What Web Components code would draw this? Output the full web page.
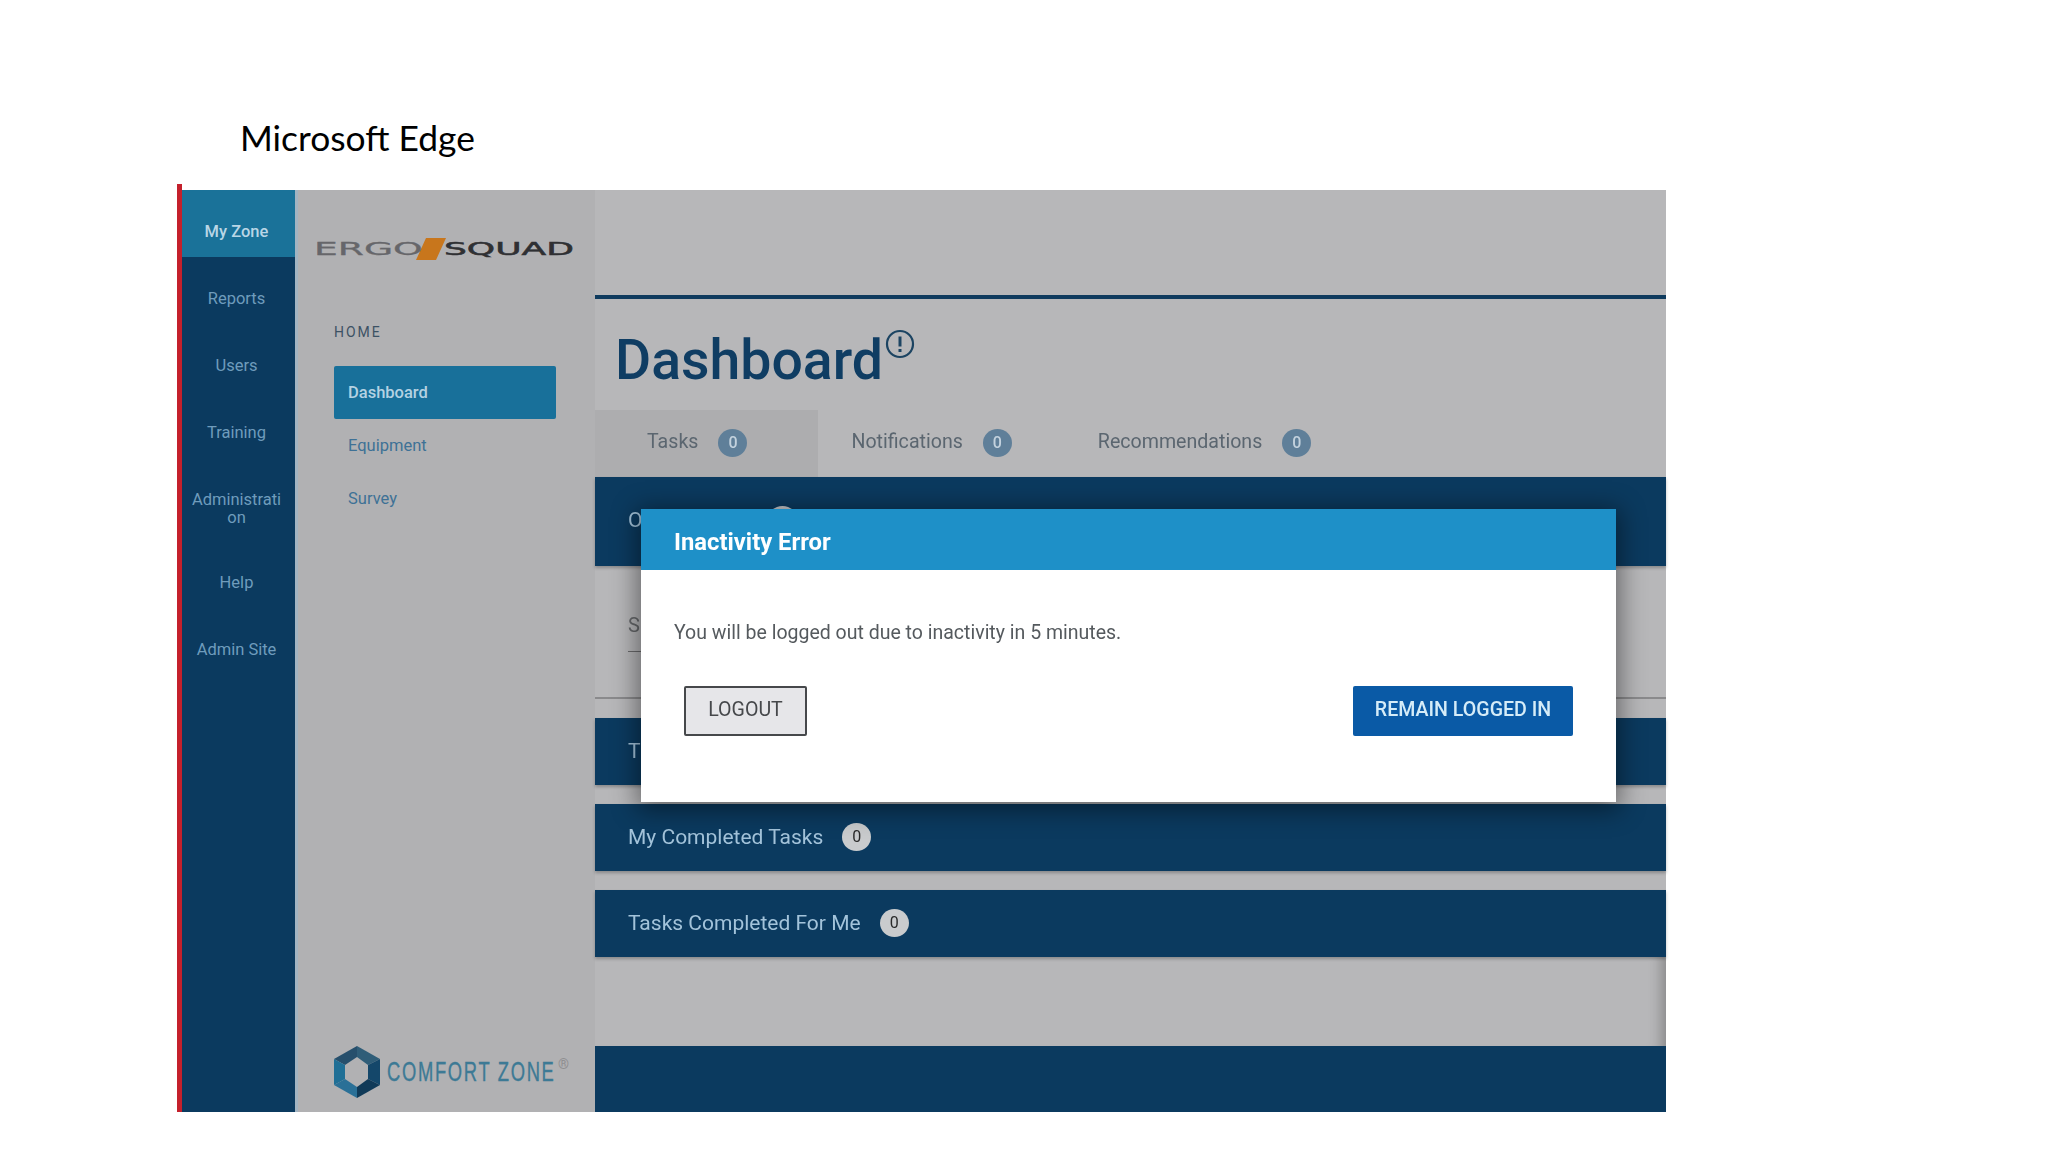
<!DOCTYPE html>
<html lang="en">
<head>
<meta charset="utf-8">
<title>Microsoft Edge</title>
<style>
  html, body { margin: 0; background: #fff; }
  body { font-family: Roboto, "Liberation Sans", sans-serif; height: 1152px; overflow: hidden; }
</style>
</head>
<body>
<slide-page>
  <span slot="caption">Microsoft Edge</span>
  <app-shell>
    <rail-nav slot="rail">
      <rail-item active>My Zone</rail-item>
      <rail-item>Reports</rail-item>
      <rail-item>Users</rail-item>
      <rail-item>Training</rail-item>
      <rail-item tight>Administration</rail-item>
      <rail-item>Help</rail-item>
      <rail-item>Admin Site</rail-item>
    </rail-nav>
    <side-nav slot="side">
      <ergo-logo slot="top"></ergo-logo>
      <span slot="heading">HOME</span>
      <side-link active>Dashboard</side-link>
      <side-link>Equipment</side-link>
      <side-link>Survey</side-link>
      <comfort-logo slot="bottom"></comfort-logo>
    </side-nav>
    <dash-main slot="main">
      <dash-tab slot="tabs" active>Tasks<count-badge slot="count" tone="tab">0</count-badge></dash-tab>
      <dash-tab slot="tabs">Notifications<count-badge slot="count" tone="tab">0</count-badge></dash-tab>
      <dash-tab slot="tabs">Recommendations<count-badge slot="count" tone="tab">0</count-badge></dash-tab>
      <task-panel first>O<count-badge slot="count" style="margin-left:107px">0</count-badge></task-panel>
      <search-card>S</search-card>
      <task-panel>T</task-panel>
      <task-panel>My Completed Tasks<count-badge slot="count">0</count-badge></task-panel>
      <task-panel>Tasks Completed For Me<count-badge slot="count">0</count-badge></task-panel>
    </dash-main>
    <modal-dialog slot="overlay">
      <span slot="title">Inactivity Error</span>
      You will be logged out due to inactivity in 5 minutes.
      <ui-button slot="actions">LOGOUT</ui-button>
      <ui-button slot="actions" primary>REMAIN LOGGED IN</ui-button>
    </modal-dialog>
  </app-shell>
</slide-page>

<script>
function defineEl(name, html) {
  class El extends HTMLElement {
    constructor() {
      super();
      this.attachShadow({ mode: 'open' }).innerHTML = html;
    }
  }
  if (!customElements.get(name)) customElements.define(name, El);
}

defineEl('slide-page', `
  <style>
    :host { display: block; }
    .caption {
      height: 184px; box-sizing: border-box; padding: 116px 0 0 240px;
      font: 35.4px/44px Lato, "Open Sans", sans-serif; color: #000;
    }
  </style>
  <div class="caption"><slot name="caption"></slot></div>
  <slot></slot>
`);

defineEl('app-shell', `
  <style>
    :host {
      display: block; position: relative;
      width: 1489px; height: 928px; margin-left: 177px; box-sizing: border-box;
      border-left: 5px solid #c4202c;
      padding-top: 6px;
      filter: blur(0.6px);
    }
    .grid { display: grid; grid-template-columns: 113px 300px 1fr; height: 100%; }
  </style>
  <div class="grid">
    <slot name="rail"></slot>
    <slot name="side"></slot>
    <slot name="main"></slot>
  </div>
  <slot name="overlay"></slot>
`);

defineEl('rail-nav', `
  <style>
    :host { display: flex; flex-direction: column; background: #0b3a5f; min-height: 0; }
  </style>
  <slot></slot>
`);

defineEl('rail-item', `
  <style>
    :host {
      display: block; box-sizing: border-box;
      padding: 33px 11px 16px 7px;
      font: 400 16.5px/18px Roboto, sans-serif; color: #6f9cbc;
      text-align: center; word-break: break-all;
    }
    :host([active]) { background: #1a7299; color: #b9d6e6; font-weight: 500; }
    :host([tight]) { padding-bottom: 14px; }
  </style>
  <slot></slot>
`);

defineEl('side-nav', `
  <style>
    :host {
      display: flex; flex-direction: column; box-sizing: border-box;
      background: #b1b1b3; border-left: 3px solid #a2b4c2;
      padding: 42px 0 14px 16px; min-height: 0;
    }
    .heading {
      margin: 56px 0 0 20px;
      font: 400 14px/20px Roboto, sans-serif; letter-spacing: 2px; color: #3c5164;
    }
    .links { margin: 24px 0 0 20px; display: flex; flex-direction: column; }
    .bottom { margin-top: auto; padding-left: 20px; }
  </style>
  <slot name="top"></slot>
  <div class="heading"><slot name="heading"></slot></div>
  <div class="links"><slot></slot></div>
  <div class="bottom"><slot name="bottom"></slot></div>
`);

defineEl('side-link', `
  <style>
    :host {
      display: flex; align-items: center; box-sizing: border-box;
      width: 222px; height: 53px; padding-left: 14px; border-radius: 2px;
      font: 400 16.5px/20px Roboto, sans-serif; color: #3e7196;
    }
    :host([active]) { background: #18709a; color: #b4d2e2; font-weight: 500; }
  </style>
  <slot></slot>
`);

defineEl('ergo-logo', `
  <style>
    :host { display: flex; align-items: center; height: 34px; width: 262px; }
    .word {
      display: inline-block; transform-origin: left center;
      font: 400 18px/18px "DejaVu Sans", sans-serif; white-space: nowrap;
    }
    .a { width: 105px; color: #66666a; transform: scaleX(2.09); -webkit-text-stroke: 0.3px #66666a; }
    .b { width: 130px; color: #2f3033; transform: scaleX(2); -webkit-text-stroke: 0.5px #2f3033; }
    svg { flex: none; margin: 0 -2px 0 -3px; }
  </style>
  <span class="word a">ERGO</span>
  <svg width="30" height="24" viewBox="0 0 30 24"><path d="M10 1 H30 L20 23 H0 Z" fill="#c8761c"/></svg>
  <span class="word b">SQUAD</span>
`);

defineEl('comfort-logo', `
  <style>
    :host { display: flex; align-items: center; height: 52px; }
    svg { flex: none; }
    .name {
      display: inline-block; width: 165px; margin-left: 7px; transform-origin: left center; transform: scaleX(0.655);
      font: 400 28px/30px "Liberation Sans", sans-serif;
      letter-spacing: 2.6px; color: #3d7a95; white-space: nowrap; -webkit-text-stroke: 0.4px #3d7a95;
    }
    .reg { align-self: flex-start; margin: 10px 0 0 6px; font: 14px/16px Roboto, sans-serif; color: #8f8f91; }
  </style>
  <svg width="46" height="52" viewBox="0 0 46 52">
    <path d="M23 0 L46 13 L34 19 L23 11 Z" fill="#2f5d78"/>
    <path d="M23 0 L0 13 L11 19 L23 11 Z" fill="#264f6c"/>
    <path d="M0 13 L0 39 L11 33 L11 19 Z" fill="#1f6f96"/>
    <path d="M46 13 L46 39 L34 33 L34 19 Z" fill="#14476a"/>
    <path d="M0 39 L23 52 L23 41 L11 33 Z" fill="#2a7097"/>
    <path d="M46 39 L23 52 L23 41 L34 33 Z" fill="#103a58"/>
  </svg>
  <span class="name">COMFORT ZONE</span>
  <span class="reg">®</span>
`);

defineEl('dash-main', `
  <style>
    :host { display: flex; flex-direction: column; background: #b7b7b9; min-height: 0; }
    .top { height: 105px; border-bottom: 4px solid #0f3b5e; flex: none; }
    .heading { height: 111px; flex: none; display: flex; padding-left: 20px; box-sizing: border-box; }
    h1 { margin: 29px 0 0; font: 500 55.4px/66px Roboto, sans-serif; color: #0f3d63; }
    svg { margin: 30px 0 0 2px; flex: none; }
    .tabs { display: flex; height: 67px; flex: none; }
    .body { display: flex; flex-direction: column; flex: none; }
    .spacer { flex: 1; box-shadow: inset -16px 0 14px -12px rgba(0,0,0,.28); }
    .foot { height: 66px; background: #0b3a5f; flex: none; }
  </style>
  <div class="top"></div>
  <div class="heading">
    <h1>Dashboard</h1>
    <svg width="30" height="30" viewBox="0 0 30 30" fill="none" stroke="#1c4462">
      <circle cx="15" cy="15" r="13" stroke-width="2.2"/>
      <path d="M15 7.5 V17.5" stroke-width="3"/>
      <path d="M15 20 V23" stroke-width="3"/>
    </svg>
  </div>
  <div class="tabs"><slot name="tabs"></slot></div>
  <div class="body"><slot></slot></div>
  <div class="spacer"></div>
  <div class="foot"></div>
`);

defineEl('dash-tab', `
  <style>
    :host {
      display: flex; align-items: center; gap: 20px; box-sizing: border-box;
      padding: 0 53px 4px 33px;
      font: 400 19.6px/24px Roboto, sans-serif; color: #5b6670;
    }
    :host([active]) { background: #adadaf; padding: 0 71px 4px 52px; }
  </style>
  <slot></slot><slot name="count"></slot>
`);

defineEl('count-badge', `
  <style>
    :host {
      display: inline-flex; align-items: center; justify-content: center;
      width: 29px; height: 28px; border-radius: 50%;
      background: #c9cbcd; color: #2a2a2a;
      font: 400 16px/1 Roboto, sans-serif;
    }
    :host([tone="tab"]) { background: #5f7f99; color: #c3d2de; font-weight: 500; margin-top: 2px; }
  </style>
  <slot></slot>
`);

defineEl('task-panel', `
  <style>
    :host {
      display: flex; align-items: center; gap: 19px; box-sizing: border-box;
      height: 67px; margin-top: 19px; padding: 0 0 2px 33px;
      background: #0b3a5f; flex: none;
      font: 400 21px/24px Roboto, sans-serif; color: #a3c3da;
      box-shadow: 0 2px 3px rgba(0,0,0,.25);
    }
    :host([first]) { height: 89px; margin-top: 0; padding-bottom: 4px; }
  </style>
  <slot></slot><slot name="count"></slot>
`);

defineEl('search-card', `
  <style>
    :host {
      display: block; box-sizing: border-box; height: 133px; flex: none;
      padding: 45px 0 0 33px;
      border-bottom: 2px solid #8a8a8c;
      font: 400 20px/28px Roboto, sans-serif; color: #66686b;
    }
    .line { width: 30px; height: 1px; margin-top: 12px; background: #6a6a6c; }
  </style>
  <slot></slot>
  <div class="line"></div>
`);

defineEl('modal-dialog', `
  <style>
    :host {
      position: absolute; left: 459px; top: 325px; width: 975px; height: 293px;
      display: flex; flex-direction: column; background: #fff;
      box-shadow: 0 4px 24px 4px rgba(0,0,0,.45);
    }
    header {
      height: 61px; flex: none; display: flex; align-items: center; box-sizing: border-box; padding: 4px 0 0 33px;
      background: #1e90c8; color: #fff; font: 700 23.8px/26px Roboto, sans-serif;
    }
    .msg { padding: 51px 33px 0; font: 400 19.5px/24px Roboto, sans-serif; color: #555a5e; }
    .actions { display: flex; justify-content: space-between; margin: 41px 43px 0; }
  </style>
  <header><slot name="title"></slot></header>
  <div class="msg"><slot></slot></div>
  <div class="actions"><slot name="actions"></slot></div>
`);

defineEl('ui-button', `
  <style>
    :host {
      display: inline-flex; align-items: center; justify-content: center; box-sizing: border-box;
      height: 50px; width: 123px; border: 2px solid #46484b; border-radius: 2px; padding-bottom: 2px;
      background: #e6e6e9; color: #46484b;
      font: 400 19.6px/24px Roboto, sans-serif;
    }
    :host([primary]) {
      width: 220px; border: 0; background: #0a5aa6; color: #d5ecf8; font-weight: 500;
    }
  </style>
  <slot></slot>
`);
</script>
</body>
</html>
